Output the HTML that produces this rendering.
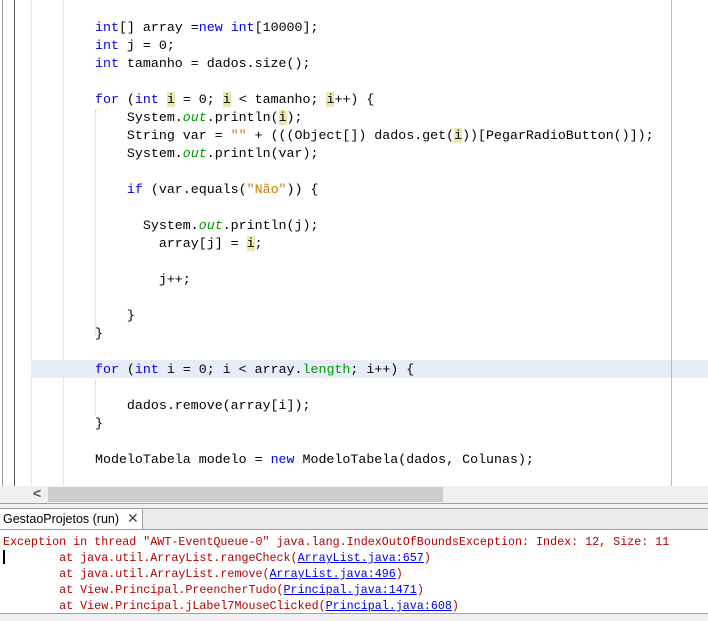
<!DOCTYPE html>
<html><head><style>
body{margin:0;width:708px;height:621px;background:#fff;position:relative;overflow:hidden;font-family:"Liberation Mono",monospace}
.a{position:absolute}
.code{position:absolute;left:0;top:19px;font-size:13.3px;line-height:18px;white-space:pre;color:#000}
.k{color:#0000e6}.g{color:#009900;font-style:italic}.s{color:#ce7b00}.h{background:#e9e9b0}
.con{position:absolute;left:3px;top:534px;font-size:11.7px;line-height:16px;white-space:pre;color:#b40000}
.l{color:#0000ee;text-decoration:underline}
</style></head><body>
<div class="a" style="left:2px;top:0;width:1px;height:487px;background:#a0a0a0"></div>
<div class="a" style="left:14px;top:0;width:1px;height:487px;background:#555"></div>
<div class="a" style="left:31px;top:0;height:487px;border-left:1px dotted #ccc"></div>
<div class="a" style="left:63px;top:0;height:487px;border-left:1px dotted #ccc"></div>
<div class="a" style="left:31px;top:360px;width:677px;height:18px;background:#e8ecf8"></div>
<div class="a" style="left:95px;top:110px;height:226px;border-left:1px dotted #ccc"></div>
<div class="a" style="left:95px;top:380px;height:36px;border-left:1px dotted #ccc"></div>
<div class="a" style="left:671px;top:0;width:1px;height:487px;background:#e8a8a8"></div>
<div class="code" style="left:95px"><span class="k">int</span>[] array =<span class="k">new</span> <span class="k">int</span>[10000];
<span class="k">int</span> j = 0;
<span class="k">int</span> tamanho = dados.size();

<span class="k">for</span> (<span class="k">int</span> <span class="h">i</span> = 0; <span class="h">i</span> &lt; tamanho; <span class="h">i</span>++) {
    System.<span class="g">out</span>.println(<span class="h">i</span>);
    String var = <span class="s">""</span> + (((Object[]) dados.get(<span class="h">i</span>))[PegarRadioButton()]);
    System.<span class="g">out</span>.println(var);

    <span class="k">if</span> (var.equals(<span class="s">"Não"</span>)) {

      System.<span class="g">out</span>.println(j);
        array[j] = <span class="h">i</span>;

        j++;

    }
}

<span class="k">for</span> (<span class="k">int</span> i = 0; i &lt; array.<span class="g" style="font-style:normal">length</span>; i++) {

    dados.remove(array[i]);
}

ModeloTabela modelo = <span class="k">new</span> ModeloTabela(dados, Colunas);</div>
<div class="a" style="left:0;top:486px;width:708px;height:17px;background:#f0f0f0"></div>
<div class="a" style="left:33px;top:485px;font-family:'Liberation Sans',sans-serif;font-size:14px;color:#555;font-weight:bold">&lt;</div>
<div class="a" style="left:48px;top:487px;width:395px;height:15px;background:#cdcdcd"></div>
<div class="a" style="left:0;top:503px;width:708px;height:1px;background:#a0a0a0"></div>
<div class="a" style="left:0;top:504px;width:708px;height:4px;background:#f0f0f0"></div>
<div class="a" style="left:0;top:508px;width:708px;height:1px;background:#a0a0a0"></div>
<div class="a" style="left:0;top:509px;width:708px;height:21px;background:#ececec"></div>
<div class="a" style="left:0;top:509px;width:142px;height:21px;background:#fff;border-right:1px solid #a0a0a0"></div>
<div class="a" style="left:3px;top:512px;font-family:'Liberation Sans',sans-serif;font-size:12.5px;color:#000">GestaoProjetos (run)</div>
<div class="a" style="left:127px;top:510px;font-family:'Liberation Sans',sans-serif;font-size:14px;color:#444">✕</div>
<div class="a" style="left:0;top:529px;width:708px;height:1px;background:#a0a0a0"></div>
<div class="a" style="left:3px;top:550px;width:2px;height:14px;background:#000"></div>
<div class="con">Exception in thread "AWT-EventQueue-0" java.lang.IndexOutOfBoundsException: Index: 12, Size: 11
        at java.util.ArrayList.rangeCheck(<span class="l">ArrayList.java:657</span>)
        at java.util.ArrayList.remove(<span class="l">ArrayList.java:496</span>)
        at View.Principal.PreencherTudo(<span class="l">Principal.java:1471</span>)
        at View.Principal.jLabel7MouseClicked(<span class="l">Principal.java:608</span>)</div>
<div class="a" style="left:0;top:613px;width:708px;height:1px;background:#a0a0a0"></div>
<div class="a" style="left:0;top:614px;width:708px;height:7px;background:#f0f0f0"></div>
</body></html>
